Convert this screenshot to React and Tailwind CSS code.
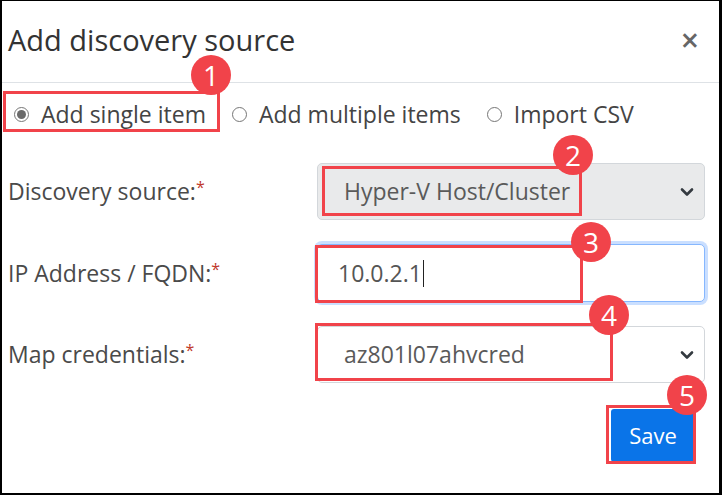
const FONT = { fontFamily: '"Open Sans", "Noto Sans", sans-serif' };

function Badge({ n, className }) {
  return (
    <div
      className={`absolute w-[40px] h-[40px] rounded-full bg-[#f1434a] text-white flex items-center justify-center text-[28px] leading-none ${className}`}
    >
      {n}
    </div>
  );
}

function Radio({ checked, label }) {
  return (
    <label className="flex items-center gap-[12px]">
      <span className="w-[15px] h-[15px] rounded-full border border-[#767676] flex items-center justify-center bg-white">
        {checked && <span className="w-[9px] h-[9px] rounded-full bg-[#6b6b6b]"></span>}
      </span>
      <span>{label}</span>
    </label>
  );
}

function Chevron() {
  return (
    <svg width="14" height="10" viewBox="0 0 14 10" className="text-[#343a40]">
      <path d="M2 2.5l5 5 5-5" fill="none" stroke="currentColor" strokeWidth="2.6" strokeLinecap="round" strokeLinejoin="round" />
    </svg>
  );
}

function Label({ text }) {
  return (
    <div className="text-[23px] text-[#4a4a4a] flex items-start">
      <span>{text}</span>
      <span className="text-[#c0392b] text-[16px] leading-none mt-[5px]">*</span>
    </div>
  );
}

export default function App() {
  return (
    <div
      className="relative w-[722px] h-[495px] bg-white border-l-2 border-t border-r-[3px] border-b-2 border-black overflow-hidden"
      style={FONT}
    >
      {/* HEADER */}
      <div className="h-[82px] border-b border-[#dee2e6] flex items-center justify-between pl-[6px] pr-[20px]">
        <h3 className="text-[29px] leading-[30px] text-[#333] font-medium mt-[-3px]">Add discovery source</h3>
        <button className="text-[32px] text-[#666] leading-none font-semibold mt-[-4px]">×</button>
      </div>

      {/* RADIO ROW */}
      <div className="flex items-center h-[24px] mt-[19px] pl-[12px] text-[23px] text-[#444] gap-[26px]">
        <Radio checked label="Add single item" />
        <Radio label="Add multiple items" />
        <Radio label="Import CSV" />
      </div>

      {/* FORM */}
      <div className="pl-[6px] mt-[37px] flex flex-col gap-[24px]">
        <div className="grid grid-cols-[309px_388px] items-center h-[57px]">
          <Label text="Discovery source:" />
          <div className="h-[57px] rounded-[5px] border border-[#d3d7db] bg-[#e9eaeb] flex items-center justify-between pl-[26px] pr-[10px] text-[23px] text-[#5a5a5a]">
            <span>Hyper-V Host/Cluster</span>
            <Chevron />
          </div>
        </div>

        <div className="grid grid-cols-[309px_388px] items-center h-[58px]">
          <Label text="IP Address / FQDN:" />
          <div className="h-[58px] rounded-[5px] border border-[#86b7fe] shadow-[0_0_0_3px_rgba(13,110,253,0.22)] bg-white flex items-center pl-[20px] text-[23px] text-[#555]">
            <span>10.0.2.1</span>
            <span className="w-[1px] h-[27px] bg-[#222] ml-[1px]"></span>
          </div>
        </div>

        <div className="grid grid-cols-[309px_388px] items-center h-[57px]">
          <Label text="Map credentials:" />
          <div className="h-[57px] rounded-[5px] border border-[#d3d7db] bg-white flex items-center justify-between pl-[26px] pr-[10px] text-[23px] text-[#5a5a5a]">
            <span>az801l07ahvcred</span>
            <Chevron />
          </div>
        </div>
      </div>

      {/* SAVE */}
      <div className="flex justify-end pr-[24px] mt-[26px]">
        <button className="w-[84px] h-[53px] bg-[#0a74e8] text-white text-[22px] rounded-[3px]">Save</button>
      </div>

      {/* ANNOTATIONS */}
      <div className="absolute left-[1px] top-[90px] w-[217px] h-[41px] border-[3px] border-[#f1434a]"></div>
      <div className="absolute left-[320px] top-[165px] w-[260px] h-[50px] border-[3px] border-[#f1434a]"></div>
      <div className="absolute left-[313px] top-[244px] w-[268px] h-[58px] border-[3px] border-[#f1434a]"></div>
      <div className="absolute left-[313px] top-[322px] w-[298px] h-[58px] border-[3px] border-[#f1434a]"></div>
      <div className="absolute left-[604px] top-[404px] w-[90px] h-[59px] border-[3px] border-[#f1434a]"></div>

      <Badge n="1" className="left-[189px] top-[54px]" />
      <Badge n="2" className="left-[551px] top-[134px]" />
      <Badge n="3" className="left-[569px] top-[221px]" />
      <Badge n="4" className="left-[587px] top-[294px]" />
      <Badge n="5" className="left-[665px] top-[374px]" />
    </div>
  );
}
